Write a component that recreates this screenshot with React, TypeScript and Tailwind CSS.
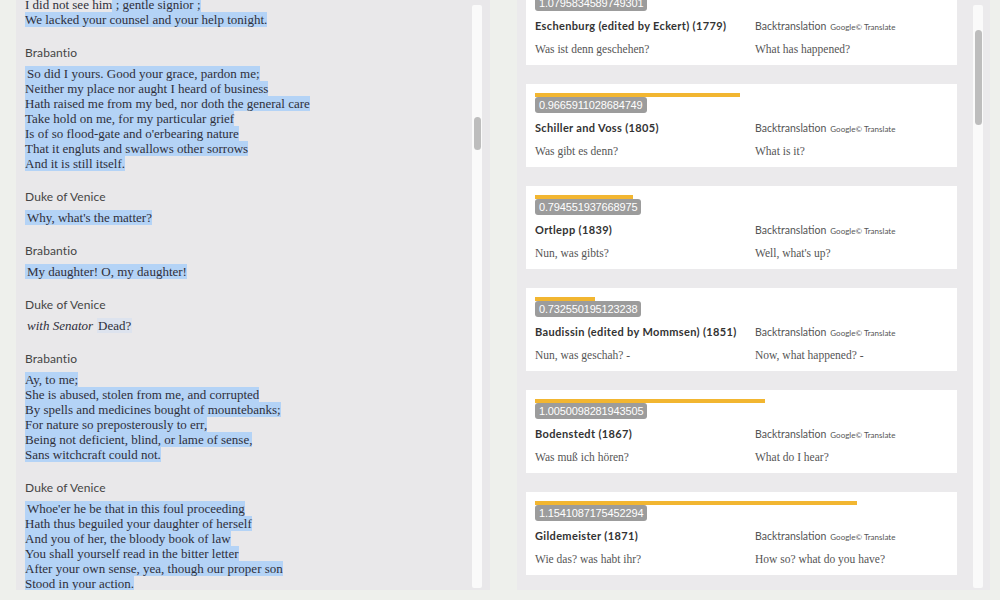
import type { ReactNode } from 'react';

type Speech = {
  speaker?: string;
  lines: ReactNode[];
  indent?: boolean;
};

const speeches: Speech[] = [
  {
    lines: [
      <>
        <span className="bg-[#e9e8ea]">I did not see him</span>
        <span> ; gentle signior ;</span>
      </>,
      'We lacked your counsel and your help tonight.',
    ],
  },
  {
    speaker: 'Brabantio',
    indent: true,
    lines: [
      'So did I yours. Good your grace, pardon me;',
      'Neither my place nor aught I heard of business',
      'Hath raised me from my bed, nor doth the general care',
      'Take hold on me, for my particular grief',
      "Is of so flood-gate and o'erbearing nature",
      'That it engluts and swallows other sorrows',
      'And it is still itself.',
    ],
  },
  { speaker: 'Duke of Venice', indent: true, lines: ["Why, what's the matter?"] },
  { speaker: 'Brabantio', indent: true, lines: ['My daughter! O, my daughter!'] },
  {
    speaker: 'Brabantio',
    lines: [
      'Ay, to me;',
      'She is abused, stolen from me, and corrupted',
      'By spells and medicines bought of mountebanks;',
      'For nature so preposterously to err,',
      'Being not deficient, blind, or lame of sense,',
      'Sans witchcraft could not.',
    ],
  },
  {
    speaker: 'Duke of Venice',
    indent: true,
    lines: [
      "Whoe'er he be that in this foul proceeding",
      'Hath thus beguiled your daughter of herself',
      'And you of her, the bloody book of law',
      'You shall yourself read in the bitter letter',
      'After your own sense, yea, though our proper son',
      'Stood in your action.',
    ],
  },
];

type Version = {
  score: string;
  bar: number;
  name: string;
  de: string;
  en: string;
};

const versions: Version[] = [
  { score: '1.0795834589749301', bar: 280, name: 'Eschenburg (edited by Eckert) (1779)', de: 'Was ist denn geschehen?', en: 'What has happened?' },
  { score: '0.9665911028684749', bar: 205, name: 'Schiller and Voss (1805)', de: 'Was gibt es denn?', en: 'What is it?' },
  { score: '0.794551937668975', bar: 98, name: 'Ortlepp (1839)', de: 'Nun, was gibts?', en: "Well, what's up?" },
  { score: '0.732550195123238', bar: 60, name: 'Baudissin (edited by Mommsen) (1851)', de: 'Nun, was geschah? -', en: 'Now, what happened? -' },
  { score: '1.0050098281943505', bar: 230, name: 'Bodenstedt (1867)', de: 'Was muß ich hören?', en: 'What do I hear?' },
  { score: '1.1541087175452294', bar: 322, name: 'Gildemeister (1871)', de: 'Wie das? was habt ihr?', en: 'How so? what do you have?' },
];

function Line({ children, first }: { children: ReactNode; first?: boolean }) {
  return (
    <div className={`h-[15px] w-fit bg-[#b4d3f6] leading-[15px] whitespace-nowrap ${first ? 'pl-[2px]' : ''}`}>
      {children}
    </div>
  );
}

function Speaker({ children }: { children: ReactNode }) {
  return (
    <div className="mb-[6px] h-[15px] font-['Lato',sans-serif] text-[12px] leading-[15px] tracking-[0.1px] text-[#454545]">
      {children}
    </div>
  );
}

function Track({ top, height }: { top: number; height: number }) {
  return (
    <div className="mt-[5px] mb-[2px] w-[10px] shrink-0 rounded-[2px] bg-[#fafafa]">
      <div className="mx-auto w-[7px] rounded-full bg-[#bdbdbd]" style={{ marginTop: top, height }} />
    </div>
  );
}

function TextPanel() {
  return (
    <div className="flex h-[590px] w-[474px] shrink-0 bg-[#e9e8ea] pr-[8px]">
      <div className="flex-1 overflow-hidden pl-[9px] font-['Liberation_Serif',serif] text-[13px] text-[#2f2f3a]">
        <div className="-mt-[3px]">
          {speeches.slice(0, 4).map((s, i) => (
            <div key={i} className="mb-[18px]">
              {s.speaker && <Speaker>{s.speaker}</Speaker>}
              {s.lines.map((l, j) => (
                <Line key={j} first={s.indent && j === 0}>
                  {l}
                </Line>
              ))}
            </div>
          ))}

          <div className="mb-[18px]">
            <Speaker>Duke of Venice</Speaker>
            <div className="flex h-[15px] items-center leading-[15px] whitespace-nowrap">
              <span className="pl-[2px] italic">with Senator</span>
              <span className="ml-[4px] bg-[#dde3ee] px-[1px]">Dead?</span>
            </div>
          </div>

          {speeches.slice(4).map((s, i) => (
            <div key={i} className="mb-[18px]">
              {s.speaker && <Speaker>{s.speaker}</Speaker>}
              {s.lines.map((l, j) => (
                <Line key={j} first={s.indent && j === 0}>
                  {l}
                </Line>
              ))}
            </div>
          ))}
        </div>
      </div>
      <Track top={112} height={33} />
    </div>
  );
}

function VersionCard({ v }: { v: Version }) {
  return (
    <div className="mb-[19px] h-[83px] bg-white px-[9px] pt-[9px]">
      <div className="h-[4px] bg-[#f2b631]" style={{ width: v.bar }} />
      <div className="h-[16px] w-fit rounded-[3px] bg-[#9c9c9c] px-[4px] font-['Liberation_Sans',sans-serif] text-[11px] leading-[16px] tracking-[-0.15px] text-white">
        {v.score}
      </div>
      <div className="mt-[9px] flex h-[12px] items-center">
        <div className="w-[220px] font-['Lato',sans-serif] text-[11px] font-bold leading-[12px] tracking-[0.35px] text-[#333]">
          {v.name}
        </div>
        <div className="flex items-baseline font-['Lato',sans-serif] leading-[12px] text-[#555]">
          <span className="text-[10.5px]">Backtranslation</span>
          <span className="ml-[4px] text-[8px]">Google© Translate</span>
        </div>
      </div>
      <div className="mt-[10px] flex h-[14px] items-center font-['Liberation_Serif',serif] text-[11.5px] leading-[14px] text-[#555]">
        <div className="w-[220px]">{v.de}</div>
        <div>{v.en}</div>
      </div>
    </div>
  );
}

function VersionPanel() {
  return (
    <div className="flex h-[590px] w-[473px] shrink-0 bg-[#ebeaec] pr-[7px]">
      <div className="w-[440px] overflow-hidden pl-[9px]">
        <div className="-mt-[18px]">
          {versions.map((v) => (
            <VersionCard key={v.name} v={v} />
          ))}
        </div>
      </div>
      <div className="w-[16px]" />
      <Track top={25} height={95} />
    </div>
  );
}

export default function App() {
  return (
    <div className="flex h-[600px] w-[1000px] gap-[27px] overflow-hidden bg-[#eef0ec] pl-[16px]">
      <TextPanel />
      <VersionPanel />
    </div>
  );
}
